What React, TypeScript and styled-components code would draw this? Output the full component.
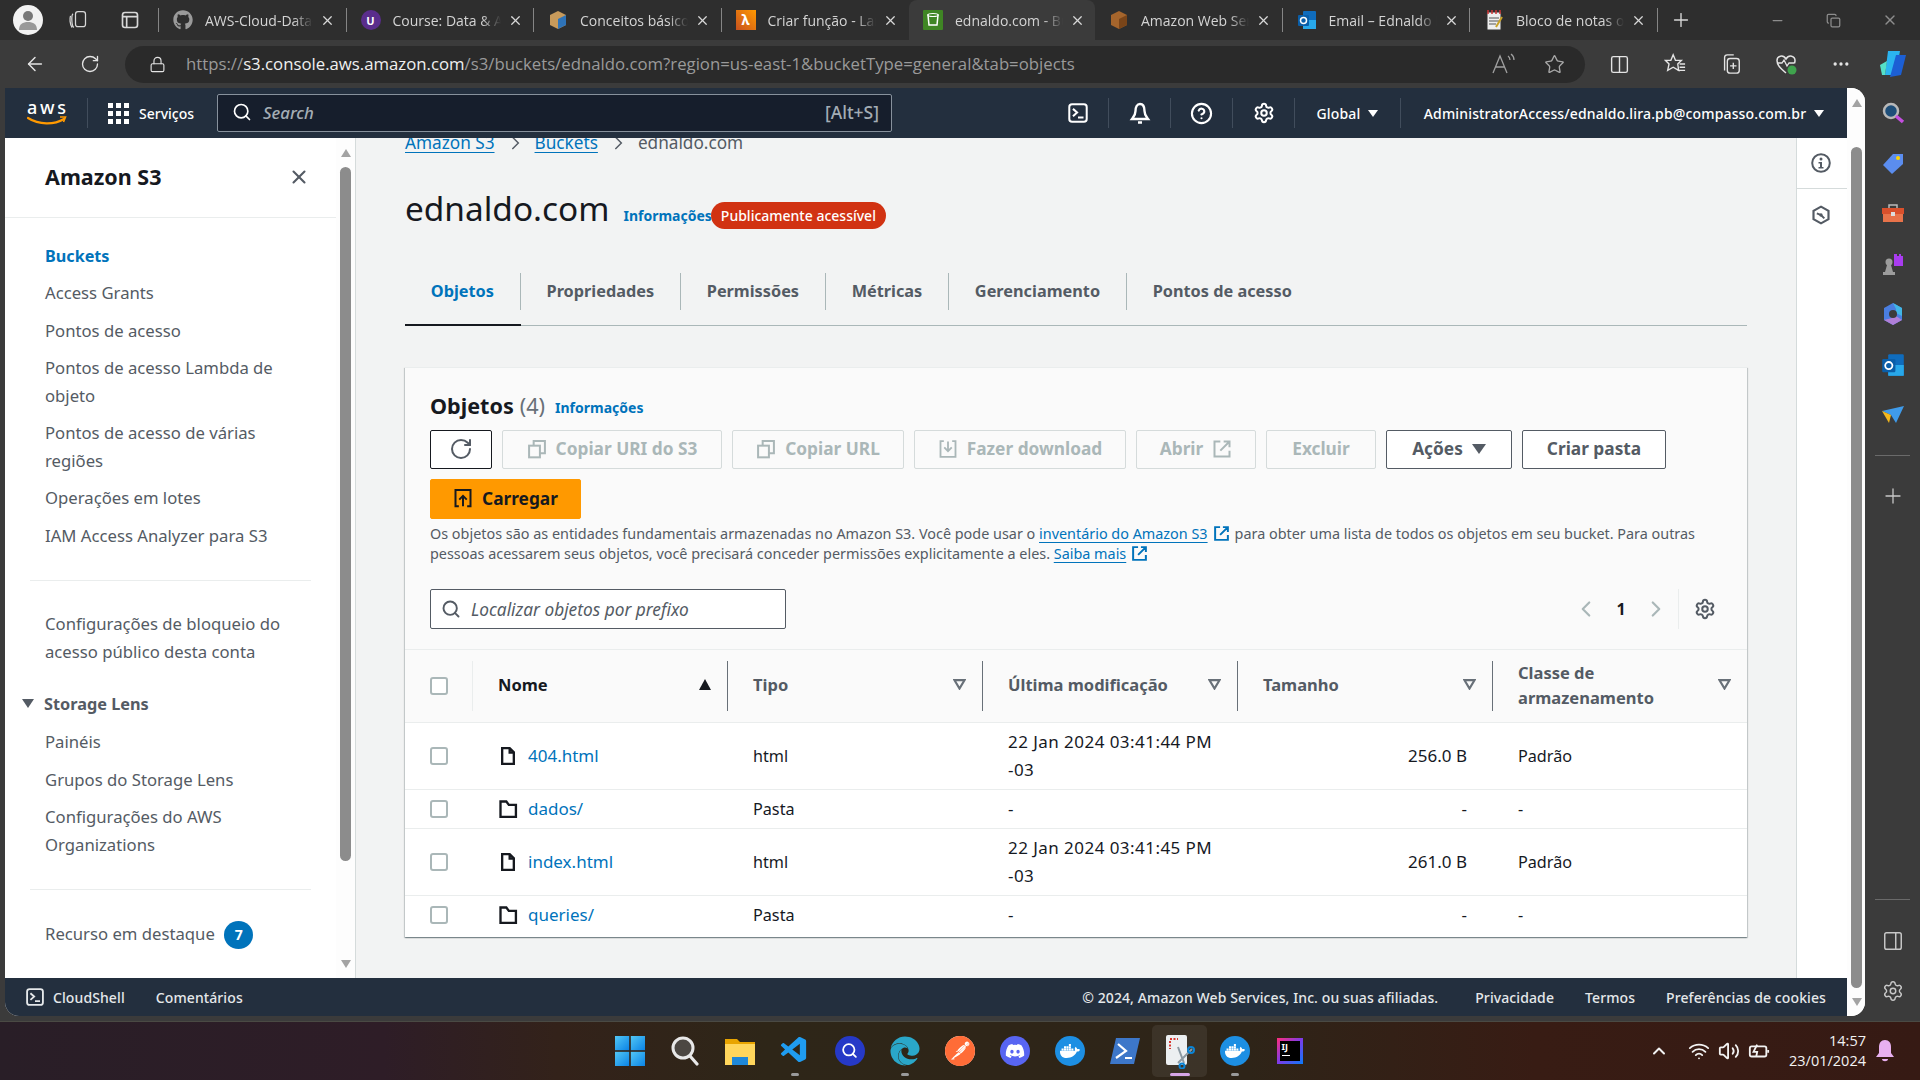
import React from 'react'
import styled, { createGlobalStyle } from 'styled-components'
import { FaGithub, FaDiscord, FaDocker, FaEdge } from 'react-icons/fa'
import { VscVscode } from 'react-icons/vsc'
import { SiPostman } from 'react-icons/si'
import {
  ArrowLeft, RotateCw, Lock, Star, Plus, Minus, X, Copy, MoreHorizontal, Search, Settings,
  CircleHelp, ChevronLeft, ChevronRight, ChevronUp, Wifi, Volume2, Columns2, PanelRight,
} from 'lucide-react'

const GlobalStyle = createGlobalStyle`
  html, body { margin: 0; padding: 0; height: 100%; overflow: hidden; background: #3b3b3b; }
  * { box-sizing: border-box; }
  body { font-family: "Noto Sans", "Open Sans", sans-serif; }
`

const Screen = styled.div`
  width: 1920px;
  height: 1080px;
  display: flex;
  flex-direction: column;
  overflow: hidden;
  background: #3b3b3b;
`

/* browser chrome */
const TabStrip = styled.div`
  height: 40px;
  background: #2e2e2e;
  display: flex;
  align-items: flex-end;
  flex-shrink: 0;
`

const StripIcon = styled.div<{ $w: number; $sep?: boolean }>`
  width: ${p => p.$w}px;
  height: 40px;
  display: flex;
  align-items: center;
  justify-content: center;
  color: #d8d8d8;
  flex-shrink: 0;
  position: relative;
  &::after {
    content: '';
    display: ${p => (p.$sep ? 'block' : 'none')};
    position: absolute;
    right: 0;
    top: 8px;
    bottom: 8px;
    width: 1px;
    background: #858585;
  }
`

const Avatar = styled.div`
  width: 30px;
  height: 30px;
  border-radius: 50%;
  background: #f2f2f2;
  display: flex;
  align-items: center;
  justify-content: center;
`

const Tab = styled.div<{ $active?: boolean; $sep?: boolean }>`
  width: ${p => (p.$active ? 186 : 187.500)}px;
  height: 40px;
  display: flex;
  align-items: center;
  flex-shrink: 0;
  padding-left: 14px;
  background: ${p => (p.$active ? '#3b3b3b' : 'transparent')};
  border-radius: ${p => (p.$active ? '8px 8px 0 0' : '0')};
  position: relative;
  &::after {
    content: '';
    display: ${p => (p.$sep ? 'block' : 'none')};
    position: absolute;
    right: 0;
    top: 8px;
    bottom: 8px;
    width: 1px;
    background: #858585;
  }
`

const TabTitle = styled.span`
  width: 108px;
  margin-left: 12px;
  font: 14px "Open Sans", sans-serif;
  color: #d4d4d4;
  white-space: nowrap;
  overflow: hidden;
  -webkit-mask-image: linear-gradient(to right, #000 82%, transparent 100%);
  mask-image: linear-gradient(to right, #000 82%, transparent 100%);
`

const TabClose = styled.span`
  margin-left: 7px;
  display: flex;
  color: #d8d8d8;
`

const WindowButtons = styled.div`
  margin-left: auto;
  display: flex;
  align-items: center;
  height: 40px;
  gap: 41px;
  padding-right: 22px;
  color: #8d8d8d;
`

const AddressRow = styled.div`
  height: 48px;
  display: flex;
  align-items: center;
  flex-shrink: 0;
  background: #3b3b3b;
  color: #e4e4e4;
`

const AddressButton = styled.div<{ $w: number }>`
  width: ${p => p.$w}px;
  display: flex;
  justify-content: center;
  align-items: center;
  flex-shrink: 0;
`

const AddressPill = styled.div`
  width: 1460px;
  height: 37px;
  background: #2a2a2a;
  border-radius: 19px;
  display: flex;
  align-items: center;
  padding-left: 24px;
  margin: 0 7px 0 15px;
  flex-shrink: 0;
`

const Url = styled.div`
  margin: -2px 0 0 20px;
  font: 16.750px "Open Sans", sans-serif;
  color: #9a9a9a;
  flex: 1;
  white-space: nowrap;
  b { font-weight: 400; color: #f0f0f0; }
`

const PillIcons = styled.div`
  display: flex;
  align-items: center;
  gap: 27px;
  padding-right: 20px;
  color: #a8a8a8;
`

const Middle = styled.div`
  flex: 1;
  display: flex;
  min-height: 0;
  margin-bottom: 5px;
`

/* console */
const ConsoleWindow = styled.div`
  width: 1860px;
  margin-left: 5px;
  display: flex;
  background: #fff;
  border-radius: 0 14px 14px 14px;
  overflow: hidden;
  flex-shrink: 0;
`

const ConsoleColumn = styled.div`
  width: 1842px;
  display: flex;
  flex-direction: column;
  flex-shrink: 0;
`

const PageScroll = styled.div`
  width: 18px;
  flex-shrink: 0;
  padding: 11px 3px 10px 4px;
  display: flex;
  flex-direction: column;
  align-items: center;
  background: #fdfdfd;
`

const ScrollArrow = styled.div<{ $down?: boolean }>`
  width: 0;
  height: 0;
  border-left: 5.5px solid transparent;
  border-right: 5.5px solid transparent;
  ${p => (p.$down ? 'border-top: 8px solid #a3a3a3;' : 'border-bottom: 8px solid #a3a3a3;')}
  flex-shrink: 0;
`

const ScrollThumb = styled.div<{ $top: number; $h: number }>`
  width: 11px;
  height: ${p => p.$h}px;
  margin-top: ${p => p.$top}px;
  background: #8c8c8c;
  border-radius: 6px;
  flex-shrink: 0;
`

const ScrollSpacer = styled.div`
  flex: 1;
`

const ConsoleHeader = styled.header`
  height: 50px;
  background: #232f3e;
  display: flex;
  align-items: center;
  color: #fff;
  flex-shrink: 0;
  font-size: 14px;
  font-weight: 500;
`

const LogoSlot = styled.div`
  width: 83px;
  height: 30px;
  display: flex;
  align-items: center;
  padding-left: 22px;
  border-right: 1px solid #414d5c;
  flex-shrink: 0;
`

const ServicesButton = styled.div`
  display: flex;
  align-items: center;
  gap: 10px;
  margin-left: 20px;
  width: 109px;
  flex-shrink: 0;
`

const ConsoleSearch = styled.div`
  width: 675px;
  height: 38px;
  background: #161e2c;
  border: 1px solid #87919c;
  border-radius: 2px;
  display: flex;
  align-items: center;
  padding: 0 12px 2px 14px;
  color: #d5dbdb;
  font-size: 16.800px;
  gap: 11px;
  flex-shrink: 0;
  em { color: #a4adb5; }
  span { margin-left: auto; color: #a4adb5; font-size: 17.500px; }
`

const HeaderIcon = styled.div`
  width: 62px;
  height: 30px;
  display: flex;
  align-items: center;
  justify-content: center;
  border-right: 1px solid #414d5c;
  flex-shrink: 0;
`

const HeaderIcons = styled.div`
  display: flex;
  margin-left: 155px;
  flex-shrink: 0;
`

const HeaderMenu = styled.div<{ $w: number; $border?: boolean }>`
  width: ${p => p.$w}px;
  height: 30px;
  display: flex;
  align-items: center;
  justify-content: center;
  gap: 8px;
  white-space: nowrap;
  flex-shrink: 0;
  letter-spacing: 0.15px;
  border-right: ${p => (p.$border ? '1px solid #414d5c' : 'none')};
`

const CaretDown = styled.span<{ $color?: string; $size?: number }>`
  width: 0;
  height: 0;
  flex-shrink: 0;
  border-left: ${p => p.$size ?? 5}px solid transparent;
  border-right: ${p => p.$size ?? 5}px solid transparent;
  border-top: ${p => (p.$size ?? 5) * 1.4}px solid ${p => p.$color ?? '#fff'};
`

const ConsoleBody = styled.div`
  flex: 1;
  display: flex;
  min-height: 0;
  background: #f2f3f3;
`

/* sidebar */
const Sidebar = styled.aside`
  width: 351px;
  background: #fff;
  border-right: 1px solid #d5dbdb;
  display: flex;
  flex-shrink: 0;
  overflow: hidden;
`

const SidebarContent = styled.div`
  width: 331px;
  flex-shrink: 0;
`

const SidebarHeader = styled.div`
  height: 80px;
  border-bottom: 1px solid #eaeded;
  display: flex;
  align-items: center;
  justify-content: space-between;
  padding: 0 26px 2px 40px;
  font-size: 21.500px;
  font-weight: 700;
  color: #16191f;
  svg { color: #545b64; }
`

const NavList = styled.nav`
  padding: 24px 0 0 40px;
  display: flex;
  flex-direction: column;
  gap: 9.3px;
`

const NavItem = styled.div<{ $active?: boolean }>`
  width: 250px;
  font-size: ${p => (p.$active ? 16.200 : 16.700)}px;
  line-height: 28px;
  color: ${p => (p.$active ? '#0073bb' : '#545b64')};
  font-weight: ${p => (p.$active ? 700 : 400)};
`

const NavDivider = styled.div`
  height: 1px;
  width: 281px;
  margin: 21px 0 20px -15px;
  background: #eaeded;
`

const NavSection = styled.div`
  margin: 14px 0 1.5px -23px;
  display: flex;
  align-items: center;
  gap: 10px;
  font-size: 16.300px;
  line-height: 28px;
  font-weight: 700;
  color: #545b64;
`

const Counter = styled.span`
  display: inline-flex;
  align-items: center;
  justify-content: center;
  width: 29px;
  height: 28px;
  margin-left: 5px;
  border-radius: 50%;
  background: #0073bb;
  color: #fff;
  font-size: 14px;
  font-weight: 700;
  vertical-align: middle;
`

const SideScroll = styled.div`
  width: 19px;
  padding: 11px 2px 10px;
  display: flex;
  flex-direction: column;
  align-items: center;
  background: #fdfdfd;
`

/* main */
const Main = styled.main`
  width: 1440px;
  padding: 0 49px;
  flex-shrink: 0;
  overflow: hidden;
`

const Breadcrumbs = styled.div`
  margin-top: -9px;
  display: flex;
  align-items: center;
  font-size: 17.200px;
  line-height: 28px;
  color: #545b64;
  a {
    color: #0073bb;
    text-decoration: underline;
    text-underline-offset: 3px;
  }
  svg { margin: 0 12px; color: #545b64; }
`

const TitleRow = styled.div`
  margin-top: 31px;
  height: 44px;
  display: flex;
  align-items: center;
  h1 {
    margin: -5px 0 0;
    font-size: 33.400px;
    font-weight: 400;
    color: #16191f;
  }
`

const TitleMeta = styled.div`
  margin-top: 11px;
  display: flex;
  align-items: center;
`

const InfoLink = styled.a`
  font-size: 14px;
  font-weight: 700;
  color: #0073bb;
  margin-left: 14px;
`

const PublicBadge = styled.span`
  height: 27px;
  display: flex;
  align-items: center;
  padding: 0 10px;
  margin-left: -1px;
  border-radius: 14px;
  background: #d13212;
  color: #fff;
  font-size: 14px;
  font-weight: 500;
`

const TabList = styled.div`
  margin-top: 41px;
  display: flex;
  border-bottom: 1px solid #aab7b8;
  height: 53px;
`

const PageTab = styled.div<{ $active?: boolean; $last?: boolean }>`
  height: 53px;
  padding: 0 0 16px;
  position: relative;
  margin-bottom: -1px;
  border-bottom: 2px solid ${p => (p.$active ? '#16191f' : 'transparent')};
  span {
    display: flex;
    align-items: center;
    height: 37px;
    padding: 0 25.800px 2px;
    font-size: 16.300px;
    font-weight: 700;
    color: ${p => (p.$active ? '#0073bb' : '#545b64')};
    border-right: ${p => (p.$last ? 'none' : '1px solid #aab7b8')};
  }
`

const Card = styled.section`
  margin-top: 41px;
  background: #fafafa;
  box-shadow: 0 1px 1px 0 rgba(0, 28, 36, 0.3), 1px 1px 1px 0 rgba(0, 28, 36, 0.15), -1px 1px 1px 0 rgba(0, 28, 36, 0.15);
  border-top: 1px solid #eaeded;
`

const CardHead = styled.div`
  padding: 23px 25px 20px;
`

const CardTitle = styled.div`
  height: 28px;
  display: flex;
  align-items: center;
  font-size: 21.600px;
  font-weight: 700;
  color: #16191f;
  i {
    font-style: normal;
    font-weight: 400;
    color: #687078;
    margin-left: 6px;
  }
  a { margin: 4px 0 0 10px; }
`

const Buttons = styled.div`
  margin-top: 11px;
  display: flex;
  flex-wrap: wrap;
  gap: 10px;
`

const ActionButton = styled.button<{ $w: number; $variant?: 'normal' | 'disabled' | 'dark' | 'primary' }>`
  width: ${p => p.$w}px;
  height: ${p => (p.$variant === 'primary' ? 40 : 39)}px;
  display: flex;
  align-items: center;
  justify-content: center;
  gap: 9px;
  padding: 0 0 2px;
  border-radius: 2px;
  font: 700 17.300px "Noto Sans", sans-serif;
  background: ${p => (p.$variant === 'primary' ? '#ff9900' : p.$variant === 'disabled' ? '#fafafa' : '#fff')};
  color: ${p => (p.$variant === 'primary' ? '#16191f' : p.$variant === 'disabled' ? '#aab7b8' : '#545b64')};
  border: 1px solid ${p =>
    p.$variant === 'primary' ? '#ff9900' : p.$variant === 'disabled' ? '#d5dbdb' : p.$variant === 'dark' ? '#16191f' : '#545b64'};
`

const Description = styled.p`
  margin: 5px 0 0;
  font-size: 14.400px;
  line-height: 20px;
  color: #545b64;
  a {
    color: #0073bb;
    text-decoration: underline;
    text-underline-offset: 3px;
  }
`

const InlineIcon = styled.span`
  display: inline-block;
  vertical-align: -3px;
  margin: 0 5px;
  color: #0073bb;
`

const FilterRow = styled.div`
  margin-top: 25px;
  display: flex;
  align-items: center;
  justify-content: space-between;
`

const FilterBox = styled.div`
  width: 356px;
  height: 40px;
  background: #fff;
  border: 1px solid #545b64;
  border-radius: 2px;
  display: flex;
  align-items: center;
  gap: 10px;
  padding-left: 10px;
  font-size: 17.300px;
  font-style: italic;
  color: #545b64;
  svg { color: #545b64; }
`

const Pagination = styled.div`
  display: flex;
  align-items: center;
  height: 40px;
  padding-right: 6px;
  color: #aab7b8;
  strong {
    width: 44px;
    text-align: center;
    font-size: 16px;
    color: #16191f;
  }
`

const PagerSettings = styled.div`
  margin-left: 9px;
  padding-left: 15px;
  border-left: 1px solid #eaeded;
  height: 40px;
  display: flex;
  align-items: center;
  color: #545b64;
`

const TableHead = styled.div`
  display: grid;
  grid-template-columns: 68px repeat(4, 255px) 1fr;
  height: 74px;
  align-items: center;
  border-top: 1px solid #eaeded;
  border-bottom: 1px solid #eaeded;
`

const HeadCheck = styled.div`
  height: 50px;
  padding-left: 25px;
  display: flex;
  align-items: center;
  border-right: 1px solid #eaeded;
`

const HeadCell = styled.div<{ $sorted?: boolean; $last?: boolean }>`
  height: 50px;
  padding: 0 16px 3px 25px;
  display: flex;
  align-items: center;
  justify-content: space-between;
  font-size: 16.500px;
  line-height: 25px;
  font-weight: 700;
  color: ${p => (p.$sorted ? '#16191f' : '#545b64')};
  border-right: ${p => (p.$last ? 'none' : '1px solid #687078')};
`

const SortUp = styled.span`
  width: 0;
  height: 0;
  border-left: 6.5px solid transparent;
  border-right: 6.5px solid transparent;
  border-bottom: 11px solid #16191f;
`

const FilterTriangle = styled.span`
  width: 13px;
  height: 11px;
  flex-shrink: 0;
  display: flex;
  svg { display: block; }
`

const Row = styled.div<{ $last?: boolean }>`
  display: grid;
  grid-template-columns: 68px repeat(4, 255px) 1fr;
  align-items: center;
  background: #fff;
  padding: 5px 0 ${p => (p.$last ? 8 : 5)}px;
  font-size: 16px;
  line-height: 28px;
  color: #16191f;
  border-bottom: ${p => (p.$last ? 'none' : '1px solid #eaeded')};
`

const CheckCell = styled.div`
  padding-left: 25px;
  display: flex;
`

const CheckBox = styled.span`
  width: 18px;
  height: 18px;
  border: 2px solid #aab7b8;
  border-radius: 3px;
  background: #fff;
  display: block;
`

const NameCell = styled.div`
  padding-left: 25px;
  display: flex;
  align-items: center;
  gap: 10px;
  font-size: 17px;
  a { color: #0073bb; }
`

const TextCell = styled.div<{ $right?: boolean; $figures?: boolean }>`
  padding: 0 ${p => (p.$right ? '26px' : '0')} 0 25px;
  text-align: ${p => (p.$right ? 'right' : 'left')};
  width: ${p => (p.$right ? '100%' : '235px')};
  font-size: ${p => (p.$figures ? 17 : 16.200)}px;
  letter-spacing: ${p => (p.$figures && !p.$right ? 0.45 : 0)}px;
`

const ToolRail = styled.div`
  width: 51px;
  background: #fff;
  flex-shrink: 0;
  border-left: 1px solid #d5dbdb;
`

const ToolButton = styled.div<{ $border?: boolean; $h: number }>`
  height: ${p => p.$h}px;
  display: flex;
  justify-content: center;
  align-items: center;
  padding-right: 2px;
  color: #545b64;
  border-bottom: ${p => (p.$border ? '1px solid #d5dbdb' : 'none')};
`

const ConsoleFooter = styled.footer`
  height: 38px;
  background: #232f3e;
  color: #e5e8ea;
  display: flex;
  align-items: center;
  flex-shrink: 0;
  font-size: 14px;
  font-weight: 500;
  letter-spacing: 0.1px;
  padding: 0 21px 0 20px;
`

const FooterLink = styled.span<{ $gap: number }>`
  margin-left: ${p => p.$gap}px;
  display: flex;
  align-items: center;
  gap: 8px;
  white-space: nowrap;
`

const FooterRight = styled.div`
  margin-left: auto;
  display: flex;
`

/* edge sidebar */
const EdgeRail = styled.div`
  width: 55px;
  flex-shrink: 0;
  display: flex;
  flex-direction: column;
  align-items: center;
`

const EdgeIcon = styled.div`
  height: 50.3px;
  display: flex;
  align-items: center;
  justify-content: center;
  flex-shrink: 0;
  color: #c8c8c8;
`

const EdgeRule = styled.div`
  width: 35px;
  height: 1px;
  background: #6a6a6a;
  margin: 15px 0 15px;
  flex-shrink: 0;
`

/* taskbar */
const Taskbar = styled.div`
  height: 59px;
  flex-shrink: 0;
  display: flex;
  align-items: center;
  padding-left: 602px;
  background: linear-gradient(90deg, #291e27 0%, #2e1d27 20%, #33221a 29%, #2e2618 40%, #2e2418 65%, #381c14 80%, #361a14 100%);
  border-top: 1px solid #4a4a44;
  color: #fff;
`

const TaskSlot = styled.div<{ $active?: boolean; $dot?: boolean }>`
  width: 55px;
  height: 52px;
  margin-top: -1px;
  display: flex;
  align-items: center;
  justify-content: center;
  position: relative;
  border-radius: 5px;
  background: ${p => (p.$active ? 'rgba(255,255,255,0.07)' : 'transparent')};
  &::after {
    content: '';
    display: ${p => (p.$dot || p.$active ? 'block' : 'none')};
    position: absolute;
    bottom: 1px;
    left: 50%;
    transform: translateX(-50%);
    width: ${p => (p.$active ? 20 : 8)}px;
    height: 3px;
    border-radius: 2px;
    background: ${p => (p.$active ? '#d8a6e8' : '#9a9a9a')};
  }
`

const Tray = styled.div`
  margin-left: auto;
  display: flex;
  align-items: center;
  height: 59px;
  padding-right: 16px;
  color: #f2f2f2;
`

const TrayIcons = styled.div`
  display: flex;
  align-items: center;
  gap: 8px;
`

const TrayChevron = styled(ChevronUp)`
  margin-right: 11px;
`

const Clock = styled.div`
  margin-left: 19px;
  text-align: right;
  font: 14.500px/20px "Open Sans", sans-serif;
  color: #f2f2f2;
`

const Round = styled.div<{ $bg: string; $size?: number }>`
  width: ${p => p.$size ?? 30}px;
  height: ${p => p.$size ?? 30}px;
  border-radius: 50%;
  background: ${p => p.$bg};
  display: flex;
  align-items: center;
  justify-content: center;
  color: #fff;
  flex-shrink: 0;
`

const UdemyRound = styled(Round)`
  font-size: 11px;
  font-weight: 700;
`

const LambdaSquare = styled.span`
  width: 20px;
  height: 20px;
  background: linear-gradient(45deg, #c7511f, #ff9900);
  color: #fff;
  font: 700 14px/20px "Noto Sans", sans-serif;
  text-align: center;
  flex-shrink: 0;
`

const IdeaSquare = styled.div`
  width: 26px;
  height: 26px;
  padding: 3px;
  background: linear-gradient(135deg, #ff2d7a, #7c3bea 50%, #087cfa);
  display: flex;
`

const IdeaInner = styled.div`
  flex: 1;
  background: #000;
  color: #fff;
  font: 700 9px/10px "Noto Sans", sans-serif;
  padding: 1px 0 0 2px;
  span { display: block; width: 8px; height: 1px; background: #fff; margin-top: 3px; }
`

const Ic = ({ s = 20, children, stroke = 'currentColor', w = 2, vb = 24 }: {
  s?: number; children: React.ReactNode; stroke?: string; w?: number; vb?: number
}) => (
  <svg width={s} height={s} viewBox={`0 0 ${vb} ${vb}`} fill="none" stroke={stroke} strokeWidth={w} style={{ display: 'block', flexShrink: 0 }}>
    {children}
  </svg>
)

const TerminalIcon = ({ s = 22 }: { s?: number }) => (
  <Ic s={s} w={2.2}>
    <rect x="2.5" y="2.5" width="19" height="19" rx="3" />
    <path d="M6.5 7.5l4.5 4-4.5 4M12 17h6" />
  </Ic>
)

const BellIcon = () => (
  <Ic s={24} w={2.4}>
    <path d="M12 3c-3 0-4.500 3-4.500 7 0 4-2 6-3.500 8h16c-1.500-2-3.500-4-3.500-8 0-4-1.500-7-4.500-7z" />
    <path d="M10 21.500h4" />
  </Ic>
)

const AwsLogo = () => (
  <svg width="40" height="26" viewBox="0 0 40 26" style={{ display: 'block' }}>
    <text x="0" y="14" fill="#fff" fontFamily="Noto Sans" fontSize="18" fontWeight="500" textLength="39">aws</text>
    <path d="M1 18c11 7 26 7 36 1" fill="none" stroke="#f90" strokeWidth="2.2" strokeLinecap="round" />
    <path d="M33 17l5.500 0-2 5" fill="none" stroke="#f90" strokeWidth="1.600" />
  </svg>
)

const GridIcon = () => (
  <svg width="21" height="21" viewBox="0 0 21 21" fill="#fff" style={{ display: 'block' }}>
    {[0, 8, 16].flatMap(y => [0, 8, 16].map(x => <rect key={`${x}-${y}`} x={x} y={y} width="5" height="5" />))}
  </svg>
)

const CopyIcon = () => (
  <Ic s={20} w={2.4}>
    <rect x="2.5" y="8" width="13" height="14" />
    <path d="M8 8V2.500h13.500V17H15.500" />
  </Ic>
)

const DownloadIcon = () => (
  <Ic s={20} w={2.2}>
    <path d="M7 2.500H3v19h18v-19h-4M12 3v11M7.500 10l4.500 4.500 4.500-4.500" />
  </Ic>
)

const ExternalIcon = ({ s = 20, w = 2.4 }: { s?: number; w?: number }) => (
  <Ic s={s} w={w}>
    <path d="M10 3H3v18h18v-7M14 3h7v7M21 3L10 14" />
  </Ic>
)

const UploadIcon = () => (
  <Ic s={20} w={2.4} stroke="#16191f">
    <path d="M7 22H3V2.500h18V22h-4M12 22V10M7.500 14l4.500-4.500 4.500 4.500" />
  </Ic>
)

const RefreshIcon = () => <RotateCw size={24} strokeWidth={2} color="#545b64" />

const FileIcon = () => (
  <Ic s={20} w={2.800} stroke="#16191f">
    <path d="M5 2.500h9l5 5v14H5zM14 2.500V8h5" />
  </Ic>
)

const FolderIcon = () => (
  <Ic s={20} w={2.800} stroke="#16191f">
    <path d="M3 21.500V3h7l3 4h8.500v14.500z" />
  </Ic>
)

const FilterDown = () => (
  <svg width="13" height="11" viewBox="0 0 13 11">
    <path d="M1.500 1.200h10L6.500 9.500z" fill="none" stroke="#687078" strokeWidth="2.200" />
  </svg>
)

const SmallChevron = () => (
  <Ic s={16} w={2.200}>
    <path d="M8 3l9 9-9 9" />
  </Ic>
)

const GearIcon = ({ s = 22 }: { s?: number }) => <Settings size={s} strokeWidth={2.200} />

const Hexagon = () => (
  <svg width="20" height="20" viewBox="0 0 24 24" fill="none" stroke="#545b64" strokeWidth="2.600">
    <path d="M12 2l9 5v10l-9 5-9-5V7z" />
    <path d="M7 10l5 2 4 4" strokeWidth="2.400" />
    <circle cx="12" cy="12" r="2" fill="#545b64" stroke="none" />
  </svg>
)

const InfoRound = () => (
  <svg width="20" height="20" viewBox="0 0 20 20">
    <circle cx="10" cy="10" r="8.800" fill="none" stroke="#545b64" strokeWidth="2" />
    <circle cx="10" cy="6" r="1.500" fill="#545b64" />
    <path d="M7.500 9h3.500v5h1.500v1.500h-5V14H9v-3.500H7.500z" fill="#545b64" />
  </svg>
)

const ReadAloudIcon = () => (
  <svg width="26" height="22" viewBox="0 0 26 22" fill="none" stroke="#a0a0a0" strokeWidth="1.300">
    <path d="M2 20L9 3l7 17M4.500 14h9" />
    <path d="M17 3c1.500 1 2 2.500 2 4M20 1c2 1.500 3 4 3 6" />
  </svg>
)

const FavoritesIcon = () => (
  <Ic s={22} w={1.500}>
    <path d="M10 2l2.500 6H19l-4 4 1 7-6-3.500L4 19l1.500-7L1.500 8h6z" />
    <path d="M17 12h6M17 15.500h6M15 19h8" />
  </Ic>
)

const CollectionsIcon = () => (
  <Ic s={22} w={1.500}>
    <path d="M5 19V5a3 3 0 0 1 3-3h7" />
    <rect x="8" y="6" width="13" height="16" rx="3" />
    <path d="M14.500 10.500v7M11 14h7" />
  </Ic>
)

const HealthIcon = () => (
  <svg width="24" height="24" viewBox="0 0 24 24" fill="none">
    <path d="M12 21C6 16 3 13 3 8.500 3 4 9 2 12 7c3-5 9-3 9 1.500 0 1-.2 2-.6 3" stroke="#e4e4e4" strokeWidth="1.500" />
    <path d="M3 11h5l2-3 3 6 2-3h5" stroke="#e4e4e4" strokeWidth="1.300" />
    <circle cx="18" cy="18" r="4.500" fill="#3fa34d" />
  </svg>
)

const BoxIcon = ({ c1, c2 }: { c1: string; c2: string }) => (
  <svg width="20" height="20" viewBox="0 0 20 20" style={{ flexShrink: 0 }}>
    <path d="M10 1l8 4v10l-8 4-8-4V5z" fill={c1} />
    <path d="M10 9l8-4v10l-8 4z" fill={c2} />
  </svg>
)

const S3Icon = () => (
  <svg width="20" height="20" viewBox="0 0 20 20" style={{ flexShrink: 0 }}>
    <rect width="20" height="20" rx="1" fill="#3f8624" />
    <path d="M5 5h10l-1 10H6z" fill="none" stroke="#fff" strokeWidth="1.500" />
    <ellipse cx="10" cy="5" rx="5" ry="1.500" fill="#3f8624" stroke="#fff" strokeWidth="1.200" />
  </svg>
)

const OutlookIcon = ({ s = 20 }: { s?: number }) => (
  <svg width={s} height={s} viewBox="0 0 20 20" style={{ flexShrink: 0 }}>
    <rect x="6" y="1" width="13" height="18" rx="1" fill="#0f6cbd" />
    <path d="M6 10h13v9H6z" fill="#28a8ea" />
    <rect x="1" y="5" width="11" height="11" rx="1" fill="#0a5ea8" />
    <circle cx="6.500" cy="10.500" r="3" fill="none" stroke="#fff" strokeWidth="1.500" />
  </svg>
)

const NotepadIcon = () => (
  <svg width="20" height="22" viewBox="0 0 20 22" style={{ flexShrink: 0 }}>
    <rect x="3" y="3" width="14" height="18" fill="#eee" stroke="#333" />
    <path d="M4 1v4M8 1v4M12 1v4M16 1v4" stroke="#c33" strokeWidth="1.500" />
    <path d="M5 9h10M5 12h10M5 15h7" stroke="#555" />
    <path d="M18 8l-6 10" stroke="#c9a227" strokeWidth="2" />
  </svg>
)

const tabs = [
  { title: 'AWS-Cloud-Data-Engineer', icon: <FaGithub size={20} color="#9a9a9a" style={{ flexShrink: 0 }} />, sep: true },
  { title: 'Course: Data & AI', icon: <UdemyRound $bg="#5a2d8c" $size={20}>U</UdemyRound>, sep: true },
  { title: 'Conceitos básicos', icon: <BoxIcon c1="#c79a5b" c2="#2e73b8" />, sep: true },
  { title: 'Criar função - Lambda', icon: <LambdaSquare>λ</LambdaSquare> },
  { title: 'ednaldo.com - Buckets', icon: <S3Icon />, active: true },
  { title: 'Amazon Web Services', icon: <BoxIcon c1="#a5652c" c2="#7a4519" />, sep: true },
  { title: 'Email – Ednaldo Lira', icon: <OutlookIcon />, sep: true },
  { title: 'Bloco de notas on-line', icon: <NotepadIcon />, sep: true },
]

const navTop = ['Access Grants', 'Pontos de acesso', 'Pontos de acesso Lambda de objeto', 'Pontos de acesso de várias regiões', 'Operações em lotes', 'IAM Access Analyzer para S3']
const navLens = ['Painéis', 'Grupos do Storage Lens', 'Configurações do AWS Organizations']

const pageTabs = ['Objetos', 'Propriedades', 'Permissões', 'Métricas', 'Gerenciamento', 'Pontos de acesso']

const columns = ['Tipo', 'Última modificação', 'Tamanho', 'Classe de armazenamento']

const rows = [
  { name: '404.html', file: true, type: 'html', date: '22 Jan 2024 03:41:44 PM -03', size: '256.0 B', cls: 'Padrão' },
  { name: 'dados/', file: false, type: 'Pasta', date: '-', size: '-', cls: '-' },
  { name: 'index.html', file: true, type: 'html', date: '22 Jan 2024 03:41:45 PM -03', size: '261.0 B', cls: 'Padrão' },
  { name: 'queries/', file: false, type: 'Pasta', date: '-', size: '-', cls: '-' },
]

const edgeIcons = [
  <svg key="s" width="24" height="24" viewBox="0 0 24 24"><circle cx="10" cy="10" r="7" fill="#1e4e79" stroke="#b8b8b8" strokeWidth="2.500" /><path d="M15 15l7 6" stroke="#c44fe0" strokeWidth="3.500" /></svg>,
  <svg key="t" width="24" height="24" viewBox="0 0 24 24"><path d="M12 3h10v10L11 23 2 14z" fill="#5b8def" /><circle cx="17" cy="7" r="2" fill="#ffd400" /></svg>,
  <svg key="b" width="24" height="24" viewBox="0 0 24 24"><path d="M8 6V3h8v3" fill="none" stroke="#bbb" strokeWidth="1.500" /><rect x="1" y="6" width="22" height="6" fill="#d9502c" /><rect x="2" y="12" width="20" height="8" fill="#e8734a" /><rect x="10" y="10" width="4" height="4" fill="#ddd" /></svg>,
  <svg key="c" width="24" height="24" viewBox="0 0 24 24"><path d="M14 2h2v2h2V2h2v2h2V2v12H13V2z" fill="#a93cf0" /><circle cx="8" cy="10" r="3.500" fill="#9c9c9c" /><path d="M6 13h4l2 7H4zM2 20h12v3H2z" fill="#9c9c9c" /></svg>,
  <svg key="o" width="24" height="24" viewBox="0 0 24 24"><path d="M12 1l9 5v12l-9 5-9-5V6z" fill="#4a7ee0" /><path d="M12 1l9 5v8l-6-3V7z" fill="#41b6e6" /><path d="M3 18l9 5 9-5-6-4-4 2z" fill="#b07fd8" /><circle cx="12" cy="12" r="4" fill="#3b3b3b" /></svg>,
  <OutlookIcon key="l" s={24} />,
  <svg key="p" width="24" height="24" viewBox="0 0 24 24"><path d="M1 8l22-5-8 17-5-8z" fill="#3f9bea" /><path d="M1 8l9 4-2 8z" fill="#f3b81d" /></svg>,
]

const taskIcons: { node: React.ReactNode; dot?: boolean; active?: boolean }[] = [
  {
    node: (
      <svg width="30" height="30" viewBox="0 0 30 30">
        <defs><linearGradient id="w" x1="0" y1="0" x2="1" y2="1"><stop offset="0" stopColor="#52c7f5" /><stop offset="1" stopColor="#0a83e6" /></linearGradient></defs>
        <rect width="14.200" height="14.200" fill="url(#w)" /><rect x="15.800" width="14.200" height="14.200" fill="url(#w)" />
        <rect y="15.800" width="14.200" height="14.200" fill="url(#w)" /><rect x="15.800" y="15.800" width="14.200" height="14.200" fill="url(#w)" />
      </svg>
    ),
  },
  {
    node: (
      <svg width="28" height="30" viewBox="0 0 28 30">
        <circle cx="12" cy="12" r="10" fill="#4c4742" stroke="#e8e8e8" strokeWidth="3" />
        <path d="M19 20l7 8" stroke="#e8e8e8" strokeWidth="3.200" strokeLinecap="round" />
      </svg>
    ),
  },
  {
    node: (
      <svg width="30" height="28" viewBox="0 0 30 28">
        <path d="M0 2h12l3 3h15v23H0z" fill="#e8a400" />
        <path d="M0 7h30v21H0z" fill="#ffd65c" />
        <path d="M7 20h16v8H7z" fill="#1e88d9" />
      </svg>
    ),
  },
  { node: <VscVscode size={31} color="#1f9cf0" />, dot: true },
  {
    node: (
      <Round $bg="#2639c7" $size={30}>
        <Search size={17} strokeWidth={2.500} />
      </Round>
    ),
  },
  { node: <FaEdge size={30} color="#2aa7c9" />, dot: true },
  { node: <Round $bg="#fff" $size={30}><SiPostman size={30} color="#ff6c37" /></Round> },
  { node: <Round $bg="#5865f2" $size={30}><FaDiscord size={20} /></Round> },
  { node: <Round $bg="#1d8fe3" $size={30}><FaDocker size={20} /></Round> },
  {
    node: (
      <svg width="30" height="30" viewBox="0 0 30 30">
        <path d="M6 2h24l-6 26H0z" fill="#3d77c9" />
        <path d="M8 8l8 7-10 7M15 22h7" fill="none" stroke="#fff" strokeWidth="2.200" />
      </svg>
    ),
  },
  {
    node: (
      <svg width="32" height="36" viewBox="0 0 32 36">
        <rect x="2" y="2" width="21" height="30" rx="2" fill="#eceff1" />
        <path d="M6 8v8M6 6h8" stroke="#d8372f" strokeWidth="2" strokeDasharray="2 1.500" />
        <path d="M14 14l6 16M28 16l-14 14" stroke="#8d9aa3" strokeWidth="2" />
        <circle cx="27" cy="17" r="3" fill="none" stroke="#0a84d6" strokeWidth="2" />
        <circle cx="18" cy="33" r="2.500" fill="none" stroke="#0a84d6" strokeWidth="2" />
      </svg>
    ),
    active: true,
  },
  { node: <Round $bg="#1d8fe3" $size={30}><FaDocker size={20} /></Round>, dot: true },
  { node: <IdeaSquare><IdeaInner>IJ<span /></IdeaInner></IdeaSquare> },
]

export default function App() {
  return (
    <Screen>
      <GlobalStyle />
      <TabStrip>
        <StripIcon $w={55}>
          <Avatar>
            <svg width="22" height="22" viewBox="0 0 22 22">
              <circle cx="11" cy="7" r="5" fill="#777" />
              <path d="M2 21c0-6 4-8 9-8s9 2 9 8z" fill="#999" />
            </svg>
          </Avatar>
        </StripIcon>
        <StripIcon $w={45}>
          <Ic s={20} w={1.500}><rect x="9" y="2" width="12" height="18" rx="3" /><path d="M6 4.500C4 6 4 18 7 21M3 7c-1 3-1 10 2 14" /></Ic>
        </StripIcon>
        <StripIcon $w={59} $sep>
          <Ic s={20} w={2}><rect x="3" y="3" width="18" height="18" rx="3" /><path d="M3 8h18M8 8v13" /></Ic>
        </StripIcon>
        {tabs.map(t => (
          <Tab key={t.title} $active={t.active} $sep={t.sep}>
            {t.icon}
            <TabTitle>{t.title}</TabTitle>
            <TabClose><X size={15} /></TabClose>
          </Tab>
        ))}
        <StripIcon $w={46}><Plus size={22} strokeWidth={1.500} /></StripIcon>
        <WindowButtons>
          <Minus size={15} />
          <Copy size={15} />
          <X size={16} />
        </WindowButtons>
      </TabStrip>

      <AddressRow>
        <AddressButton $w={69}><ArrowLeft size={22} strokeWidth={1.600} /></AddressButton>
        <AddressButton $w={41}><RotateCw size={20} strokeWidth={1.600} /></AddressButton>
        <AddressPill>
          <Lock size={17} strokeWidth={1.600} color="#e4e4e4" />
          <Url>https://<b>s3.console.aws.amazon.com</b>/s3/buckets/ednaldo.com?region=us-east-1&amp;bucketType=general&amp;tab=objects</Url>
          <PillIcons>
            <ReadAloudIcon />
            <Star size={21} strokeWidth={1.500} />
          </PillIcons>
        </AddressPill>
        <AddressButton $w={55}><Columns2 size={21} strokeWidth={1.600} /></AddressButton>
        <AddressButton $w={56}><FavoritesIcon /></AddressButton>
        <AddressButton $w={55}><CollectionsIcon /></AddressButton>
        <AddressButton $w={55}><HealthIcon /></AddressButton>
        <AddressButton $w={55}><MoreHorizontal size={20} /></AddressButton>
        <AddressButton $w={50}>
          <svg width="30" height="30" viewBox="0 0 30 30"><path d="M10 2h12l-4 24H7z" fill="#2bb4f0" /><path d="M18 6h10l-5 20-11 2z" fill="#1c5fd4" /><path d="M2 16l7-4-2 14H4z" fill="#55e0c8" /></svg>
        </AddressButton>
      </AddressRow>

      <Middle>
        <ConsoleWindow>
          <ConsoleColumn>
            <ConsoleHeader>
              <LogoSlot><AwsLogo /></LogoSlot>
              <ServicesButton><GridIcon /> Serviços</ServicesButton>
              <ConsoleSearch>
                <Search size={20} color="#fff" strokeWidth={2} />
                <em>Search</em>
                <span>[Alt+S]</span>
              </ConsoleSearch>
              <HeaderIcons>
                <HeaderIcon><TerminalIcon /></HeaderIcon>
                <HeaderIcon><BellIcon /></HeaderIcon>
                <HeaderIcon><CircleHelp size={23} strokeWidth={2.200} /></HeaderIcon>
                <HeaderIcon><GearIcon /></HeaderIcon>
              </HeaderIcons>
              <HeaderMenu $w={106} $border>Global <CaretDown /></HeaderMenu>
              <HeaderMenu $w={446}>AdministratorAccess/ednaldo.lira.pb@compasso.com.br <CaretDown /></HeaderMenu>
            </ConsoleHeader>

            <ConsoleBody>
              <Sidebar>
                <SidebarContent>
                  <SidebarHeader>Amazon S3 <X size={22} strokeWidth={2.300} /></SidebarHeader>
                  <NavList>
                    <NavItem $active>Buckets</NavItem>
                    {navTop.map(n => <NavItem key={n}>{n}</NavItem>)}
                    <NavDivider />
                    <NavItem>Configurações de bloqueio do acesso público desta conta</NavItem>
                    <NavSection><CaretDown $color="#545b64" $size={6.500} /> Storage Lens</NavSection>
                    {navLens.map(n => <NavItem key={n}>{n}</NavItem>)}
                    <NavDivider />
                    <NavItem>Recurso em destaque <Counter>7</Counter></NavItem>
                  </NavList>
                </SidebarContent>
                <SideScroll>
                  <ScrollArrow />
                  <ScrollThumb $top={10} $h={694} />
                  <ScrollSpacer />
                  <ScrollArrow $down />
                </SideScroll>
              </Sidebar>

              <Main>
                <Breadcrumbs>
                  <a>Amazon S3</a><SmallChevron /><a>Buckets</a><SmallChevron />ednaldo.com
                </Breadcrumbs>
                <TitleRow>
                  <h1>ednaldo.com</h1>
                  <TitleMeta>
                    <InfoLink>Informações</InfoLink>
                    <PublicBadge>Publicamente acessível</PublicBadge>
                  </TitleMeta>
                </TitleRow>
                <TabList>
                  {pageTabs.map((t, i) => (
                    <PageTab key={t} $active={i === 0} $last={i === pageTabs.length - 1}><span>{t}</span></PageTab>
                  ))}
                </TabList>

                <Card>
                  <CardHead>
                    <CardTitle>Objetos <i>(4)</i> <InfoLink>Informações</InfoLink></CardTitle>
                    <Buttons>
                      <ActionButton $w={62} $variant="dark"><RefreshIcon /></ActionButton>
                      <ActionButton $w={220} $variant="disabled"><CopyIcon /> Copiar URI do S3</ActionButton>
                      <ActionButton $w={172} $variant="disabled"><CopyIcon /> Copiar URL</ActionButton>
                      <ActionButton $w={212} $variant="disabled"><DownloadIcon /> Fazer download</ActionButton>
                      <ActionButton $w={120} $variant="disabled">Abrir <ExternalIcon /></ActionButton>
                      <ActionButton $w={110} $variant="disabled">Excluir</ActionButton>
                      <ActionButton $w={126}>Ações <CaretDown $color="#545b64" $size={7.500} /></ActionButton>
                      <ActionButton $w={144}>Criar pasta</ActionButton>
                      <ActionButton $w={151} $variant="primary"><UploadIcon /> Carregar</ActionButton>
                    </Buttons>
                    <Description>
                      Os objetos são as entidades fundamentais armazenadas no Amazon S3. Você pode usar o <a>inventário do Amazon S3</a><InlineIcon><ExternalIcon s={17} w={2.800} /></InlineIcon>para obter uma lista de todos os objetos em seu bucket. Para outras pessoas acessarem seus objetos, você precisará conceder permissões explicitamente a eles. <a>Saiba mais</a><InlineIcon><ExternalIcon s={17} w={2.800} /></InlineIcon>
                    </Description>
                    <FilterRow>
                      <FilterBox><Search size={20} strokeWidth={2.300} /> Localizar objetos por prefixo</FilterBox>
                      <Pagination>
                        <ChevronLeft size={26} strokeWidth={2} />
                        <strong>1</strong>
                        <ChevronRight size={26} strokeWidth={2} />
                        <PagerSettings><GearIcon /></PagerSettings>
                      </Pagination>
                    </FilterRow>
                  </CardHead>

                  <TableHead>
                    <HeadCheck><CheckBox /></HeadCheck>
                    <HeadCell $sorted>Nome <SortUp /></HeadCell>
                    {columns.map((c, i) => (
                      <HeadCell key={c} $last={i === columns.length - 1}>
                        <span>{c}</span>
                        <FilterTriangle><FilterDown /></FilterTriangle>
                      </HeadCell>
                    ))}
                  </TableHead>
                  {rows.map((r, i) => (
                    <Row key={r.name} $last={i === rows.length - 1}>
                      <CheckCell><CheckBox /></CheckCell>
                      <NameCell>{r.file ? <FileIcon /> : <FolderIcon />}<a>{r.name}</a></NameCell>
                      <TextCell>{r.type}</TextCell>
                      <TextCell $figures>{r.date}</TextCell>
                      <TextCell $right $figures>{r.size}</TextCell>
                      <TextCell>{r.cls}</TextCell>
                    </Row>
                  ))}
                </Card>
              </Main>

              <ToolRail>
                <ToolButton $h={51} $border><InfoRound /></ToolButton>
                <ToolButton $h={52}><Hexagon /></ToolButton>
              </ToolRail>
            </ConsoleBody>

            <ConsoleFooter>
              <FooterLink $gap={0}><TerminalIcon s={20} /> CloudShell</FooterLink>
              <FooterLink $gap={31}>Comentários</FooterLink>
              <FooterRight>
                <FooterLink $gap={0}>© 2024, Amazon Web Services, Inc. ou suas afiliadas.</FooterLink>
                <FooterLink $gap={37}>Privacidade</FooterLink>
                <FooterLink $gap={31}>Termos</FooterLink>
                <FooterLink $gap={31}>Preferências de cookies</FooterLink>
              </FooterRight>
            </ConsoleFooter>
          </ConsoleColumn>
          <PageScroll>
            <ScrollArrow />
            <ScrollThumb $top={40} $h={841} />
            <ScrollSpacer />
            <ScrollArrow $down />
          </PageScroll>
        </ConsoleWindow>

        <EdgeRail>
          {edgeIcons.map((icon, i) => <EdgeIcon key={i}>{icon}</EdgeIcon>)}
          <EdgeRule />
          <EdgeIcon><Plus size={24} strokeWidth={1.300} /></EdgeIcon>
          <ScrollSpacer />
          <EdgeRule />
          <EdgeIcon><PanelRight size={22} strokeWidth={1.600} /></EdgeIcon>
          <EdgeIcon><Settings size={22} strokeWidth={1.600} /></EdgeIcon>
        </EdgeRail>
      </Middle>

      <Taskbar>
        {taskIcons.map((t, i) => (
          <TaskSlot key={i} $dot={t.dot} $active={t.active}>{t.node}</TaskSlot>
        ))}
        <Tray>
          <TrayIcons>
            <TrayChevron size={20} strokeWidth={2.400} />
            <Wifi size={22} />
            <Volume2 size={22} />
            <Ic s={22} w={2}><rect x="2" y="7" width="18" height="11" rx="2" /><path d="M22 11v3M10 5l-4 8h4l-1 5" /></Ic>
          </TrayIcons>
          <Clock>14:57<br />23/01/2024</Clock>
          <AddressButton $w={38}>
            <svg width="20" height="24" viewBox="0 0 20 24"><path d="M10 1c4 0 6 3 6 7v6l3 4H1l3-4V8c0-4 2-7 6-7z" fill="#e8b0f0" /><path d="M7 20h6c0 3-6 3-6 0z" fill="#e8b0f0" /></svg>
          </AddressButton>
        </Tray>
      </Taskbar>
    </Screen>
  )
}
